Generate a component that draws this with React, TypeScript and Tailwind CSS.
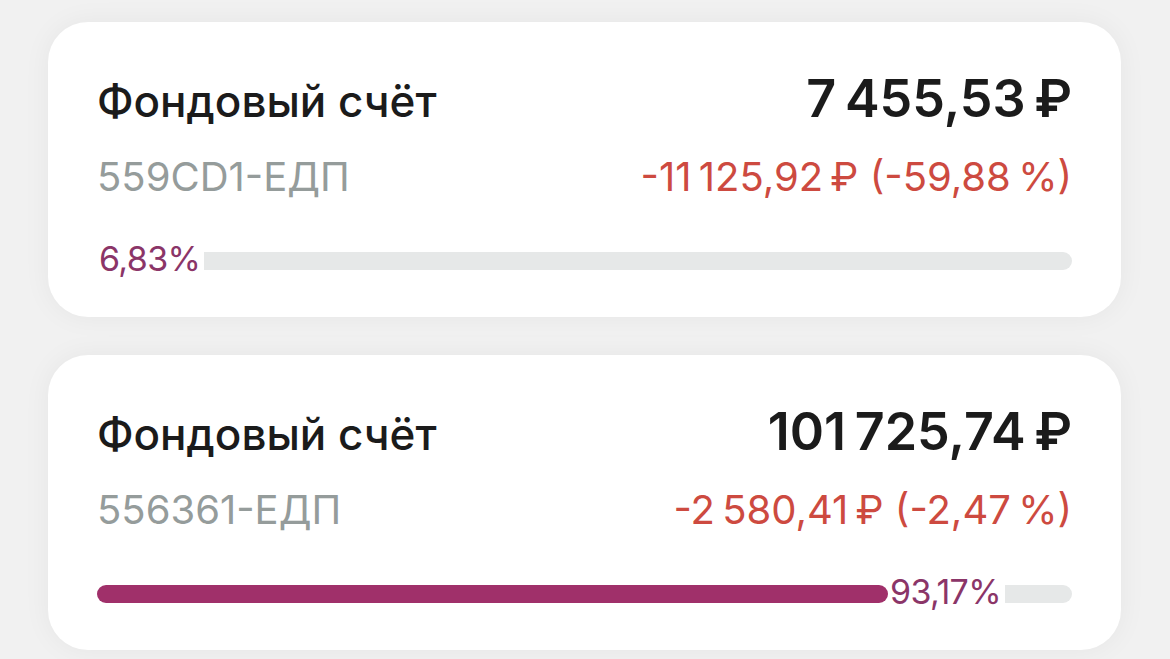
const accounts = [
  {
    title: 'Фондовый счёт',
    id: '559CD1-ЕДП',
    amount: '7\u202F455,53\u202F₽',
    change: '-11\u202F125,92\u202F₽ (-59,88\u202F%)',
    share: '6,83%',
    fill: 0,
  },
  {
    title: 'Фондовый счёт',
    id: '556361-ЕДП',
    amount: '101\u202F725,74\u202F₽',
    change: '-2\u202F580,41\u202F₽ (-2,47\u202F%)',
    share: '93,17%',
    fill: 791,
  },
];

function AccountCard({ account }: { account: (typeof accounts)[number] }) {
  return (
    <div className="rounded-[40px] bg-white px-[49px] pt-[49px] pb-[38px] shadow-[0_0_28px_rgba(0,0,0,0.05)]">
      {/* Title + balance */}
      <div className="flex h-[60px] items-baseline justify-between leading-[56px]">
        <span className="text-[44px] font-medium text-[#1b1b1b]">{account.title}</span>
        <span className="text-[52px] font-semibold text-[#1b1b1b]">{account.amount}</span>
      </div>

      {/* Account id + change */}
      <div className="mt-[22px] flex items-baseline justify-between text-[40px] leading-[48px]">
        <span className="text-[#959c9b]">{account.id}</span>
        <span className="text-[#cd4a40]">{account.change}</span>
      </div>

      {/* Share of portfolio */}
      <div className="mt-[42px] flex h-[36px] items-center">
        {account.fill > 0 && (
          <div className="h-[18px] rounded-full bg-[#a0306a]" style={{ width: `${account.fill}px` }} />
        )}
        <span className="mb-[4px] px-[2px] text-[34px] leading-[36px] tracking-[-0.6px] text-[#8b3568]">
          {account.share}
        </span>
        <div className="ml-[2px] h-[18px] flex-1 rounded-r-full rounded-l-[3px] bg-[#e6e8e8]" />
      </div>
    </div>
  );
}

export default function App() {
  return (
    <div
      className="min-h-[659px] w-[1170px] bg-[#f1f1f1] pt-[22px] pr-[49px] pl-[48px]"
      style={{ fontFamily: 'Inter, "Noto Sans", sans-serif' }}
    >
      <div className="flex flex-col gap-[38px]">
        {accounts.map((account) => (
          <AccountCard key={account.id} account={account} />
        ))}
      </div>
    </div>
  );
}
